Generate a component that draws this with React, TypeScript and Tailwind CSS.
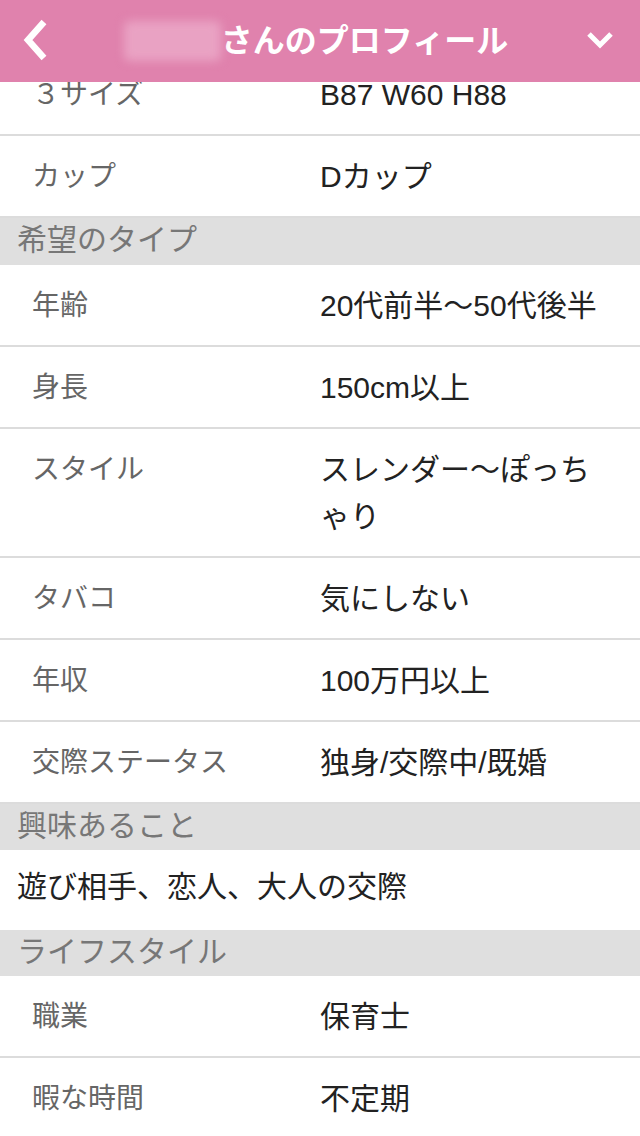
type Item =
  | { kind: "row"; label: string; value: string }
  | { kind: "section"; title: string; h: string }
  | { kind: "text"; text: string };

const items: Item[] = [
  { kind: "row", label: "３サイズ", value: "B87 W60 H88" },
  { kind: "row", label: "カップ", value: "Dカップ" },
  { kind: "section", title: "希望のタイプ", h: "h-[47px]" },
  { kind: "row", label: "年齢", value: "20代前半〜50代後半" },
  { kind: "row", label: "身長", value: "150cm以上" },
  { kind: "row", label: "スタイル", value: "スレンダー〜ぽっち\nゃり" },
  { kind: "row", label: "タバコ", value: "気にしない" },
  { kind: "row", label: "年収", value: "100万円以上" },
  { kind: "row", label: "交際ステータス", value: "独身/交際中/既婚" },
  { kind: "section", title: "興味あること", h: "h-[46px]" },
  { kind: "text", text: "遊び相手、恋人、大人の交際" },
  { kind: "section", title: "ライフスタイル", h: "h-[46px]" },
  { kind: "row", label: "職業", value: "保育士" },
  { kind: "row", label: "暇な時間", value: "不定期" },
];

function Header() {
  return (
    <div className="relative h-[82px] shrink-0 bg-[#e082ad] flex items-center justify-center">
      <svg className="absolute left-0 top-0" width="60" height="82" viewBox="0 0 60 82">
        <polyline
          points="44,22 28,40 44,58"
          fill="none"
          stroke="#fff"
          strokeWidth="6.5"
          strokeLinejoin="miter"
        />
      </svg>
      <div className="flex items-center pr-[8px]">
        <div className="w-[97px] h-[40px] bg-[#e9a2c3] blur-[5px] rounded-md" />
        <span className="text-white text-[32px] font-bold leading-none">さんのプロフィール</span>
      </div>
      <svg className="absolute right-0 top-0" width="60" height="82" viewBox="0 0 60 82">
        <polyline
          points="9,34 20,45 31,34"
          fill="none"
          stroke="#fff"
          strokeWidth="5"
          strokeLinejoin="miter"
        />
      </svg>
    </div>
  );
}

function Row({ label, value }: { label: string; value: string }) {
  return (
    <div className="flex border-b-2 border-[#dcdcdc] pt-[17px] pb-[16px] leading-[47px]">
      <div className="w-[320px] shrink-0 pl-[32px] text-[28px] text-[#666]">{label}</div>
      <div className="w-[310px] text-[30px] text-[#222] whitespace-pre-line">{value}</div>
    </div>
  );
}

export default function App() {
  return (
    <div className="w-[640px] h-[1136px] overflow-hidden bg-white flex flex-col font-['Liberation_Sans','Noto_Sans_CJK_JP',sans-serif]">
      <Header />
      <div className="flex-1 overflow-hidden">
        <div className="-mt-[28px]">
          {items.map((it, i) => {
            if (it.kind === "row") return <Row key={i} label={it.label} value={it.value} />;
            if (it.kind === "section")
              return (
                <div key={i} className={`${it.h} bg-[#dfdfdf] pl-[17px] text-[30px] leading-[44px] text-[#777]`}>
                  {it.title}
                </div>
              );
            return (
              <div key={i} className="h-[80px] pl-[17px] pt-[13px] text-[30px] leading-[47px] text-[#222]">
                {it.text}
              </div>
            );
          })}
        </div>
      </div>
    </div>
  );
}
